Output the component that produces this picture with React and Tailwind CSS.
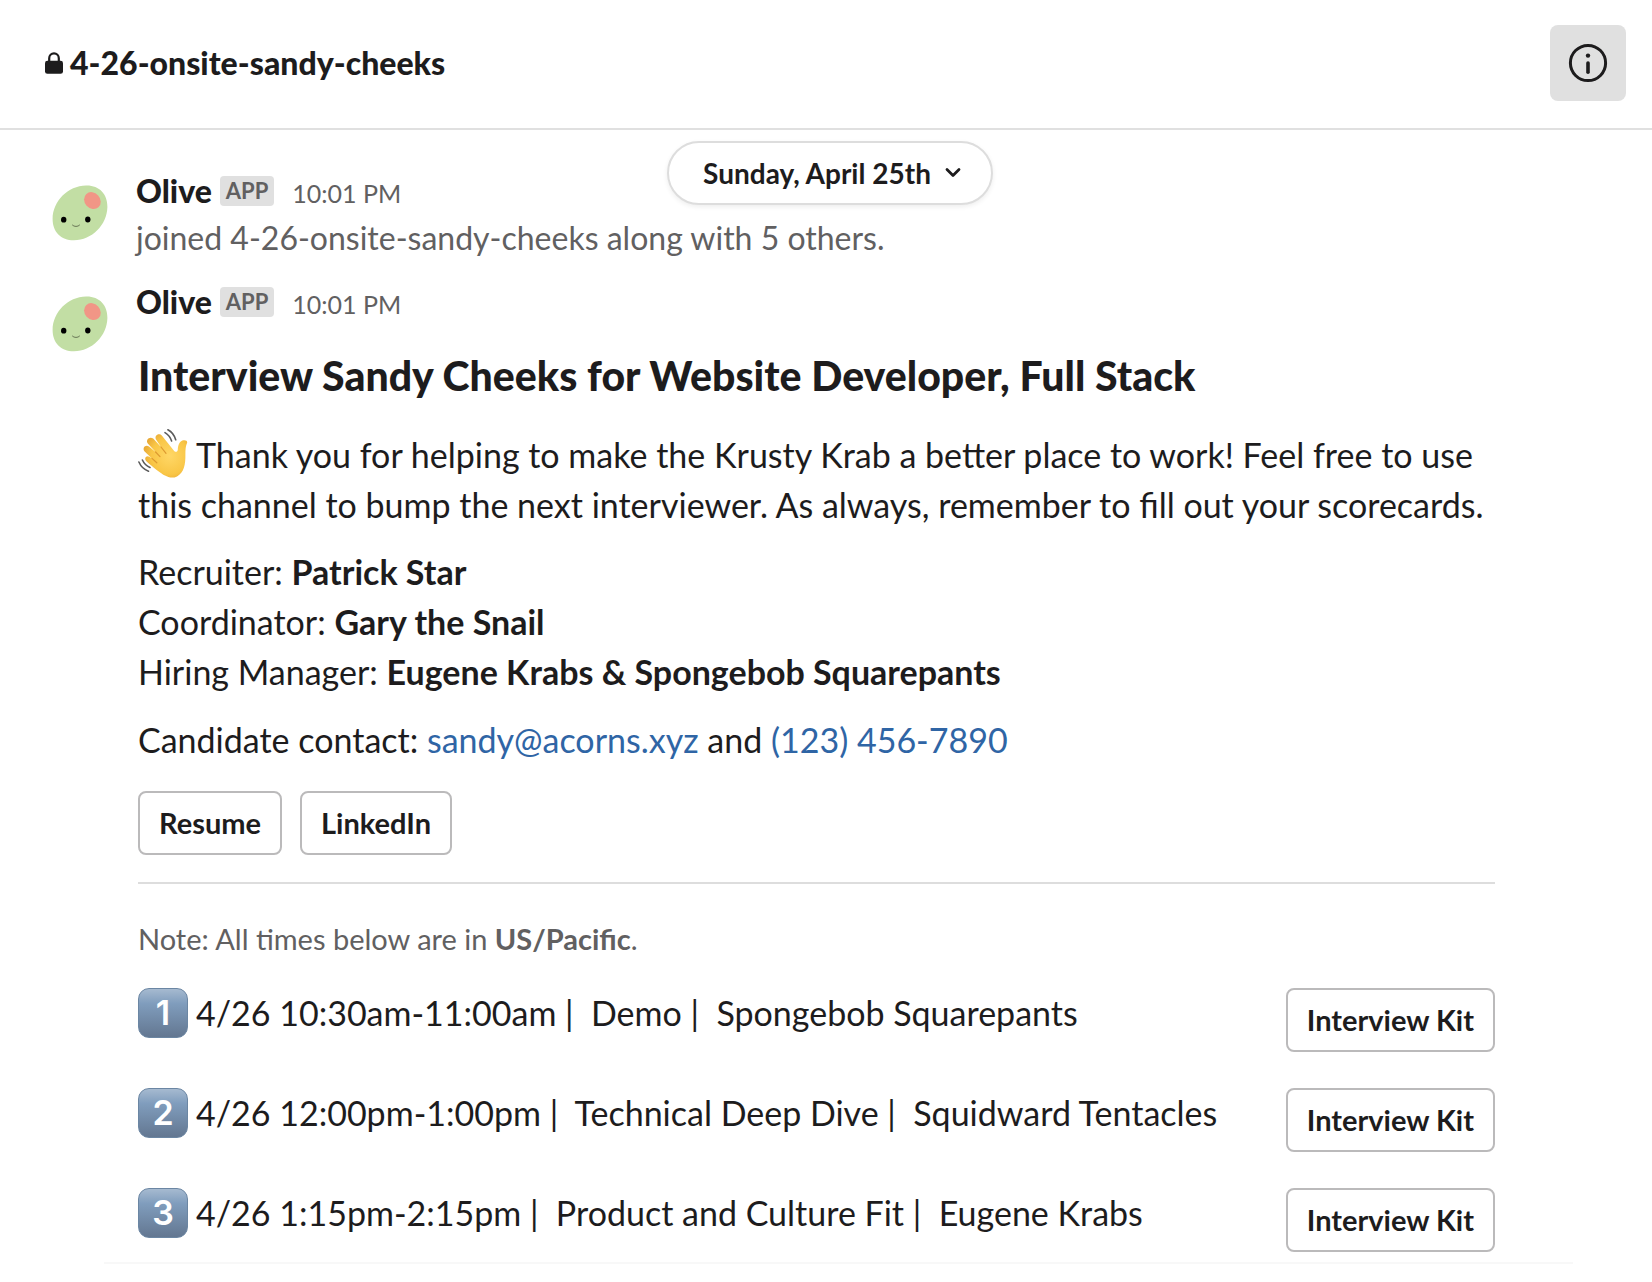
import React from "react";

function LockIcon() {
  return (
    <svg viewBox="0 0 18 22" className="h-[22px] w-[18px] shrink-0" aria-hidden="true">
      <path d="M4.2 10V6.2a4.8 4.8 0 0 1 9.6 0V10" fill="none" stroke="#1d1c1d" strokeWidth="2.2" />
      <rect x="0" y="8.8" width="18" height="13" rx="2.4" fill="#1d1c1d" />
    </svg>
  );
}

function InfoIcon() {
  return (
    <svg viewBox="0 0 40 40" className="size-10" aria-hidden="true">
      <circle cx="20" cy="20" r="17.6" fill="none" stroke="#1d1c1d" strokeWidth="3" />
      <circle cx="20" cy="12.6" r="2.2" fill="#1d1c1d" />
      <path d="M20 20v9.2" stroke="#1d1c1d" strokeWidth="3.6" strokeLinecap="round" />
    </svg>
  );
}

function OliveAvatar() {
  return (
    <svg viewBox="0 0 56 56" className="size-14 shrink-0" role="img" aria-label="Olive">
      <path
        d="M34 .6C47 .2 55.6 9 55.4 22C55 40 40 55 22 55.3C9 55.4 .6 47 .6 34C.8 16 16 1 34 .6Z"
        fill="#c2dea4"
      />
      <ellipse cx="40.4" cy="15.6" rx="7.8" ry="9" transform="rotate(-42 40.4 15.6)" fill="#f19686" />
      <ellipse cx="11.7" cy="34.7" rx="2.7" ry="2.9" fill="#000" />
      <ellipse cx="35.8" cy="34.5" rx="2.7" ry="2.9" fill="#000" />
      <path d="M20.2 39.8c2 2.1 5.6 2.1 7.6 0" fill="none" stroke="#5d6b4d" strokeWidth="0.9" />
    </svg>
  );
}

function WaveEmoji() {
  return (
    <svg viewBox="0 0 50 50" className="mr-2 -mt-[10px] inline-block size-[50px] align-middle" role="img" aria-label="waving hand">
      <defs>
        <radialGradient id="skin" cx="0.6" cy="0.5" r="0.65">
          <stop offset="0" stopColor="#ffd766" />
          <stop offset="0.65" stopColor="#f9c646" />
          <stop offset="1" stopColor="#e5a434" />
        </radialGradient>
      </defs>
      <path
        d="M27 46.5C23 44.5 15 38 8.6 32.4C5.6 29.6 8.2 25.8 11.4 27.8L14 29.4L6.6 22.4C3.8 19.2 7.6 15 11 17.6L17.6 23L9.8 14.4C7.2 10.8 11.8 6.8 15.2 9.6L23 18L18 10.4C16 6.4 21 3.2 24 6.8L36.2 22C37.8 23.6 39.6 22.8 39.8 20.8C40 17.6 40.4 13.6 44.4 11.6C46.8 10.6 49.4 11.6 49.2 13.4C47.6 16.8 47.4 20.6 47.4 25.4C47.6 35 46 43.6 39 47.4C35 49.4 30.6 48.6 27 46.5Z"
        fill="url(#skin)"
      />
      <path
        d="M17.6 23L22 27.6M23 18L28 24.4M14 29.4L18.8 33.8"
        fill="none"
        stroke="#dd9a30"
        strokeWidth="1.2"
        strokeLinecap="round"
      />
      <path
        d="M27 3.6c3 1.8 5.4 4.8 6.6 8.4M29.9.8c3.8 2 6.6 5.8 7.8 10M4.4 31c1.6 3.6 4.2 6 7.6 7.4M.9 33c2 4.6 5.2 7.6 9.6 9.2"
        fill="none"
        stroke="#5c5c5c"
        strokeWidth="1.6"
        strokeLinecap="round"
      />
    </svg>
  );
}

function MessageHeader() {
  return (
    <div className="flex h-12 items-baseline leading-[48px]">
      <span className="text-[32px] leading-[48px] font-black">Olive</span>
      <span className="ml-2 self-center rounded-[4px] bg-[#e0e0e0] px-[6px] text-[22px] leading-[30px] font-bold text-[#616061]">
        APP
      </span>
      <time className="ml-[18px] text-[25px] text-[#616061]">10:01 PM</time>
    </div>
  );
}

function Message({ children, className }) {
  return (
    <article className={`flex pl-[52px] ${className}`}>
      <div className="mt-[18px] mr-7 shrink-0">
        <OliveAvatar />
      </div>
      <div className="min-w-0 flex-1">
        <MessageHeader />
        {children}
      </div>
    </article>
  );
}

function ActionButton({ children }) {
  return (
    <button
      type="button"
      className="h-16 shrink-0 rounded-lg border-2 border-[#bbbabb] bg-white px-[19px] text-[29px] leading-[60px] font-bold"
    >
      {children}
    </button>
  );
}

const people = [
  ["Recruiter", "Patrick Star"],
  ["Coordinator", "Gary the Snail"],
  ["Hiring Manager", "Eugene Krabs & Spongebob Squarepants"],
];

const interviews = [
  { time: "4/26 10:30am-11:00am", topic: "Demo", who: "Spongebob Squarepants" },
  { time: "4/26 12:00pm-1:00pm", topic: "Technical Deep Dive", who: "Squidward Tentacles" },
  { time: "4/26 1:15pm-2:15pm", topic: "Product and Culture Fit", who: "Eugene Krabs" },
];

export default function App() {
  return (
    <div className="min-h-screen bg-white font-[Lato,sans-serif] text-[#1d1c1d]">
      <header className="flex h-[130px] items-center justify-between border-b-2 border-[#e0e0e0] pr-[26px] pb-[3px] pl-[45px]">
        <h1 className="flex items-center gap-[7px] text-[32px] leading-[50px] font-black">
          <LockIcon />
          4-26-onsite-sandy-cheeks
        </h1>
        <button
          type="button"
          aria-label="Channel details"
          className="flex size-[76px] items-center justify-center rounded-lg bg-[#e0e0e0]"
        >
          <InfoIcon />
        </button>
      </header>

      <main className="relative pt-[37px]">
        <div className="absolute inset-x-0 top-[11px] flex justify-center pl-2">
          <button
            type="button"
            className="flex h-16 items-center gap-3 rounded-full border-2 border-[#dddddd] bg-white pr-7 pl-[34px] text-[28px] font-bold shadow-[0_2px_5px_rgba(0,0,0,0.07)]"
          >
            Sunday, April 25th
            <svg viewBox="0 0 20 12" className="h-3 w-5" aria-hidden="true">
              <path d="M4 2.4l6 6 6-6" fill="none" stroke="#1d1c1d" strokeWidth="2.8" strokeLinecap="round" strokeLinejoin="round" />
            </svg>
          </button>
        </div>

        <Message className="">
          <p className="text-[32px] leading-[46px] text-[#616061]">
            joined 4-26-onsite-sandy-cheeks along with 5 others.
          </p>
        </Message>

        <Message className="mt-[17px]">
          <div className="mr-[157px] ml-[2px] text-[34px] leading-[50px]">
            <h2 className="mt-[23px] text-[41px] leading-[54px] font-black">
              Interview Sandy Cheeks for Website Developer, Full Stack
            </h2>
            <p className="mt-[27px]">
              <WaveEmoji />
              Thank you for helping to make the Krusty Krab a better place to work! Feel free to use
              this channel to bump the next interviewer. As always, remember to fill out your scorecards.
            </p>
            <ul className="mt-[17px]">
              {people.map(([role, name]) => (
                <li key={role}>
                  {role}: <b>{name}</b>
                </li>
              ))}
            </ul>
            <p className="mt-[18px]">
              Candidate contact:{" "}
              <a href="mailto:sandy@acorns.xyz" className="text-[#2f65a5]">sandy@acorns.xyz</a> and{" "}
              <a href="tel:1234567890" className="text-[#2f65a5]">(123) 456-7890</a>
            </p>
            <div className="mt-[26px] flex gap-[18px]">
              <ActionButton>Resume</ActionButton>
              <ActionButton>LinkedIn</ActionButton>
            </div>
            <hr className="mt-[27px] border-t-2 border-[#dddddd]" />
            <p className="mt-[35px] text-[29px] leading-10 text-[#616061]">
              Note: All times below are in <b>US/Pacific</b>.
            </p>
            <ol className="mt-[29px] flex flex-col gap-9">
              {interviews.map(({ time, topic, who }, i) => (
                <li key={time} className="flex items-start justify-between">
                  <div className="flex items-center">
                    <span className="mr-2 flex size-[50px] items-center justify-center rounded-[11px] border border-[#6b86a3] bg-linear-to-b from-[#a6bad0] via-[#809dbd] via-30% to-[#637791] font-[Inter,sans-serif] text-[34px] font-semibold text-white">
                      {i + 1}
                    </span>
                    <span className="whitespace-pre">{`${time} |  ${topic} |  ${who}`}</span>
                  </div>
                  <ActionButton>Interview Kit</ActionButton>
                </li>
              ))}
            </ol>
          </div>
        </Message>
        <div className="mt-[10px] mr-[79px] ml-[104px] border-t-2 border-[#f8f8f8]" />
      </main>
    </div>
  );
}
